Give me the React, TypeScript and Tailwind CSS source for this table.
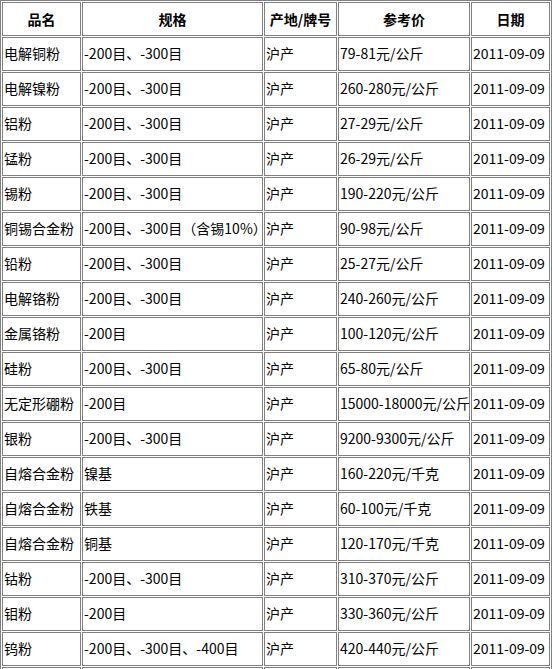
const rows: [string, string, string, string][] = [
  ['电解铜粉', '-200目、-300目', '79-81元/公斤', '2011-09-09'],
  ['电解镍粉', '-200目、-300目', '260-280元/公斤', '2011-09-09'],
  ['铝粉', '-200目、-300目', '27-29元/公斤', '2011-09-09'],
  ['锰粉', '-200目、-300目', '26-29元/公斤', '2011-09-09'],
  ['锡粉', '-200目、-300目', '190-220元/公斤', '2011-09-09'],
  ['铜锡合金粉', '-200目、-300目（含锡10%）', '90-98元/公斤', '2011-09-09'],
  ['铅粉', '-200目、-300目', '25-27元/公斤', '2011-09-09'],
  ['电解铬粉', '-200目、-300目', '240-260元/公斤', '2011-09-09'],
  ['金属铬粉', '-200目', '100-120元/公斤', '2011-09-09'],
  ['硅粉', '-200目、-300目', '65-80元/公斤', '2011-09-09'],
  ['无定形硼粉', '-200目', '15000-18000元/公斤', '2011-09-09'],
  ['银粉', '-200目、-300目', '9200-9300元/公斤', '2011-09-09'],
  ['自熔合金粉', '镍基', '160-220元/千克', '2011-09-09'],
  ['自熔合金粉', '铁基', '60-100元/千克', '2011-09-09'],
  ['自熔合金粉', '铜基', '120-170元/千克', '2011-09-09'],
  ['钴粉', '-200目、-300目', '310-370元/公斤', '2011-09-09'],
  ['钼粉', '-200目', '330-360元/公斤', '2011-09-09'],
  ['钨粉', '-200目、-300目、-400目', '420-440元/公斤', '2011-09-09'],
];

const cell = 'border border-[#808080] h-[34px] px-px whitespace-nowrap';
const td = `${cell} pb-[3px]`;

export default function App() {
  return (
    <div className="bg-white text-black text-[14px] leading-none" style={{ fontFamily: '"Noto Sans CJK SC", "Liberation Sans", sans-serif' }}>
      <table className="table-fixed w-[552px] border-separate border-spacing-[1px] border border-[#808080]">
        <thead>
          <tr>
            <th className={`${cell} w-[79px] text-center font-bold`}>品名</th>
            <th className={`${cell} w-[181px] text-center font-bold`}>规格</th>
            <th className={`${cell} w-[73px] text-center font-bold`}>产地/牌号</th>
            <th className={`${cell} w-[132px] text-center font-bold`}>参考价</th>
            <th className={`${cell} w-[79px] text-center font-bold`}>日期</th>
          </tr>
        </thead>
        <tbody>
          {rows.map((r, i) => (
            <tr key={i}>
              <td className={td}>{r[0]}</td>
              <td className={td}>{r[1]}</td>
              <td className={td}>沪产</td>
              <td className={td}>{r[2]}</td>
              <td className={td}>{r[3]}</td>
            </tr>
          ))}
          {/* next row is cut off by the window edge */}
          <tr>
            <td className={td}></td>
            <td className={td}></td>
            <td className={td}></td>
            <td className={td}></td>
            <td className={td}></td>
          </tr>
        </tbody>
      </table>
    </div>
  );
}
